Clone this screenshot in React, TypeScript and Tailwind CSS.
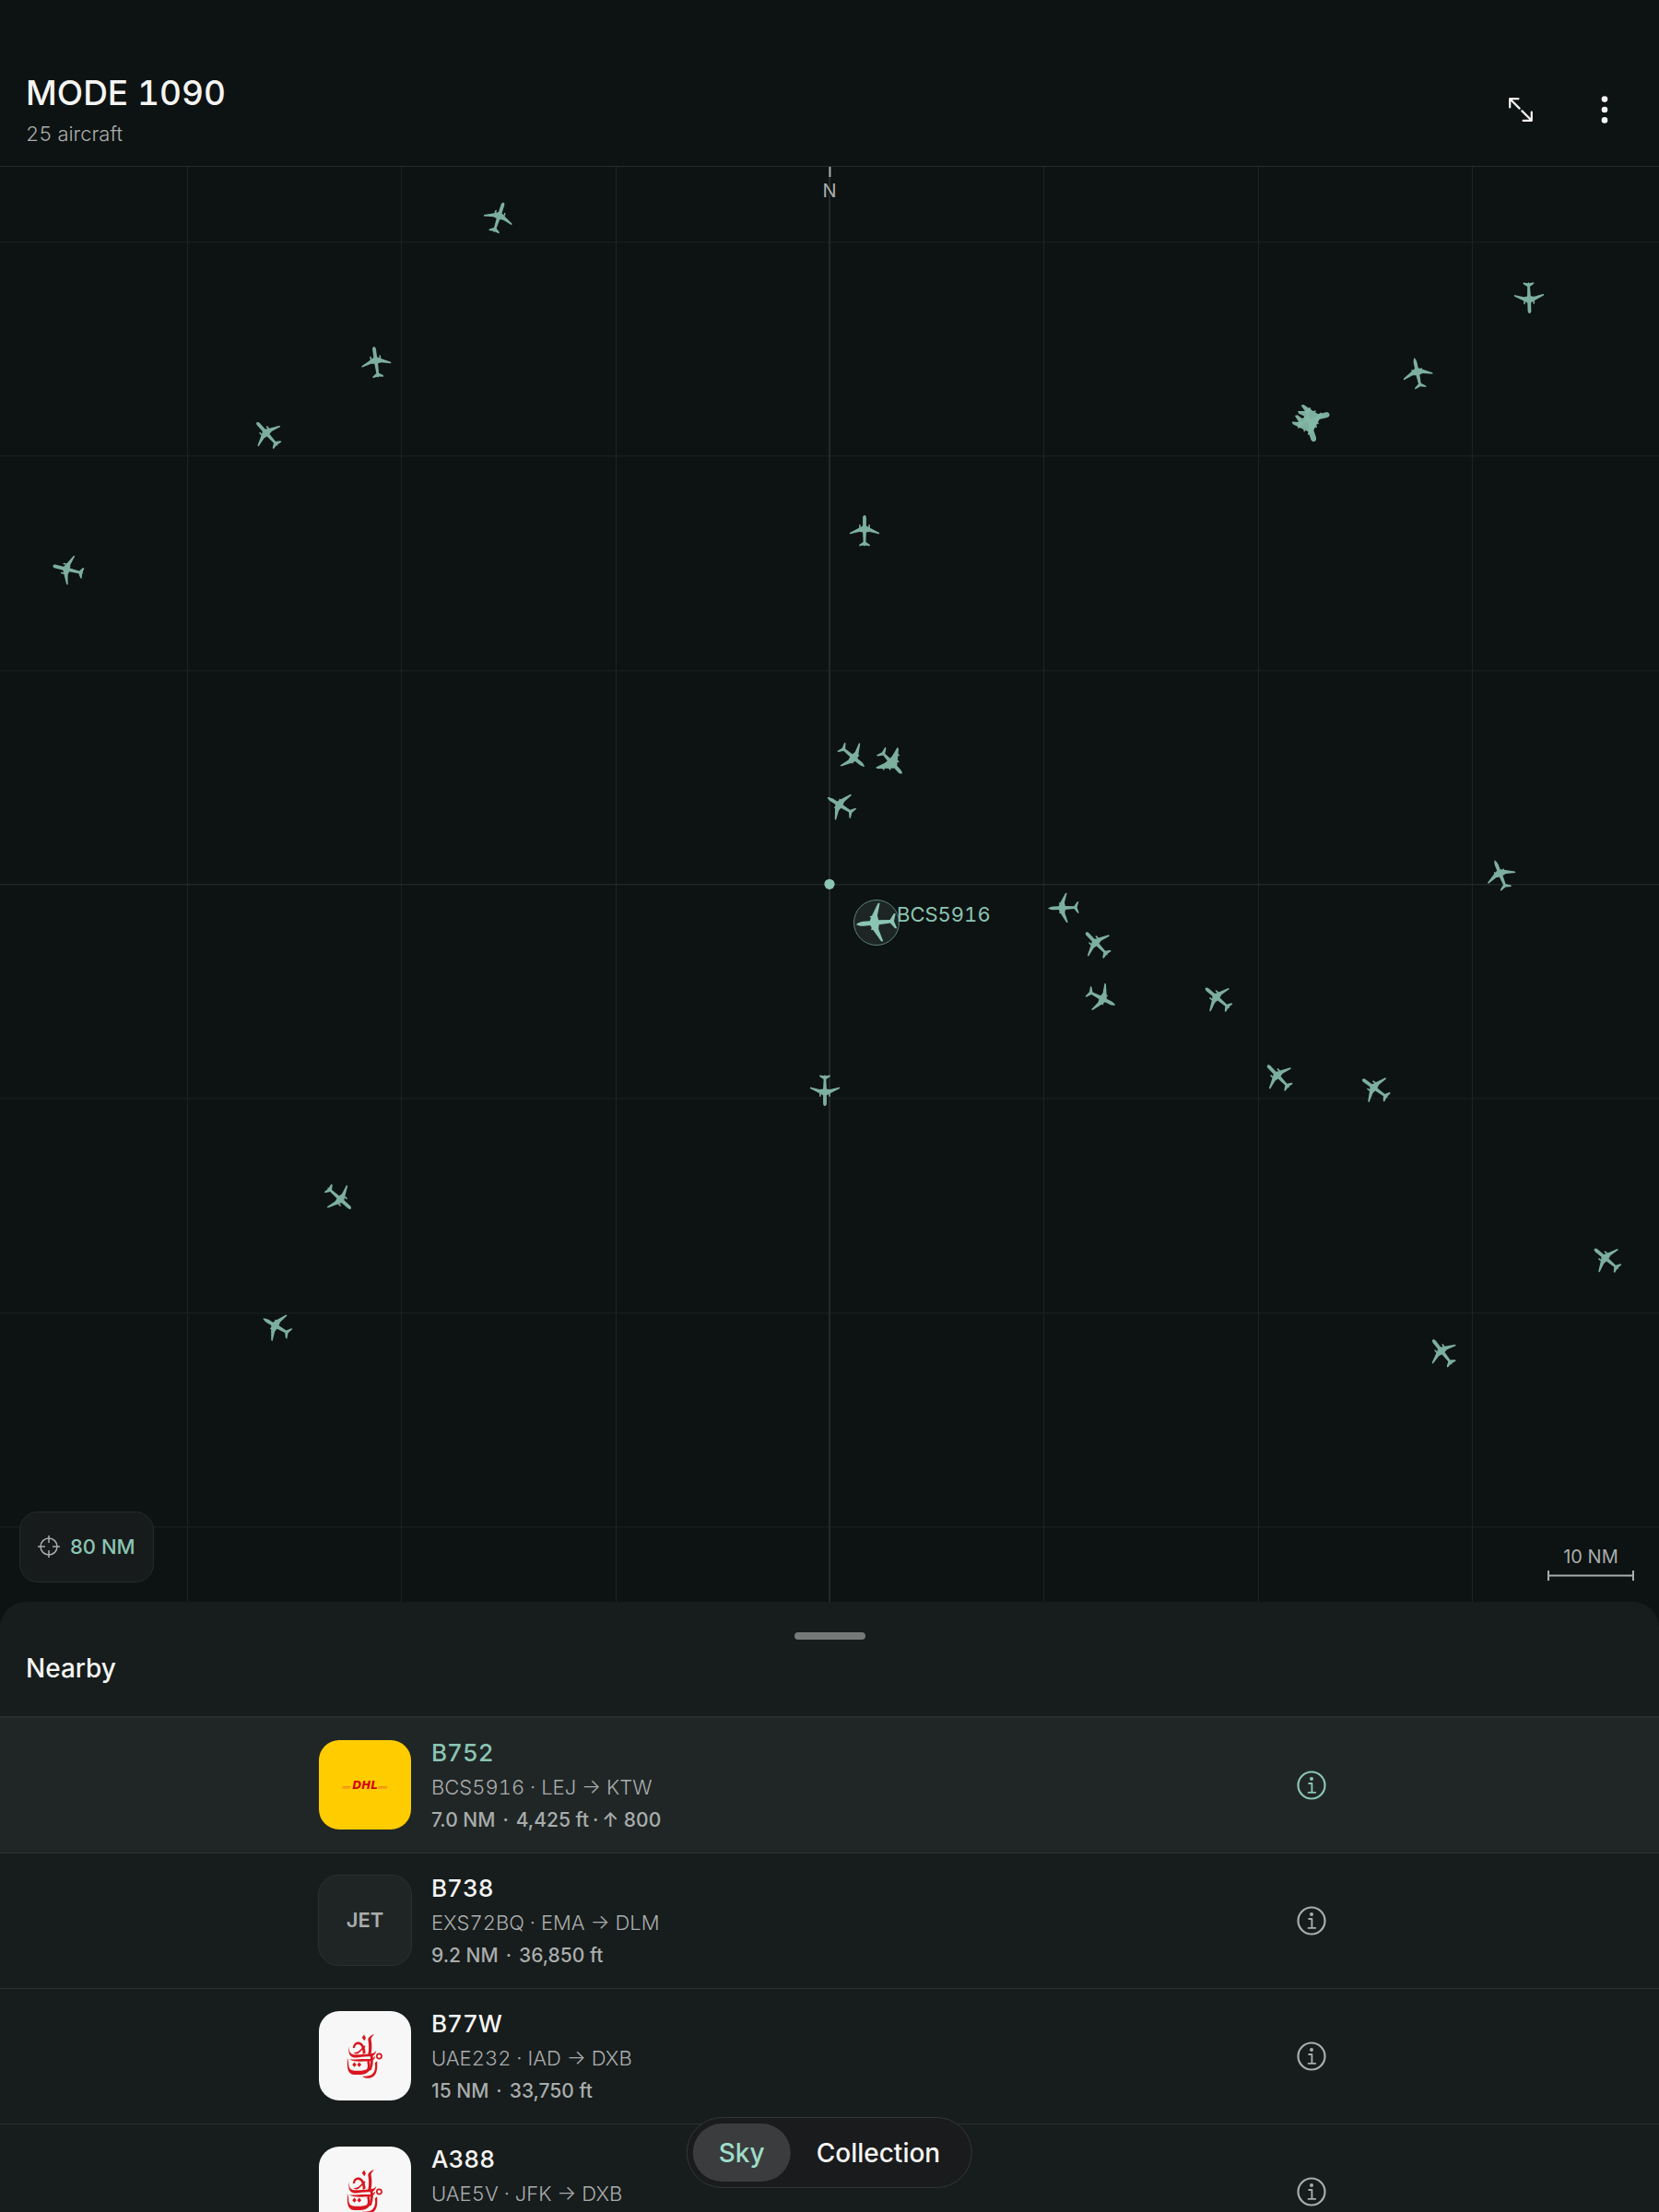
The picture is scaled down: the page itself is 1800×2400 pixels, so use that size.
import React from "react";

type Shape = "twin" | "slim" | "quad" | "jet";

interface Aircraft {
  id: string;
  x: number;
  y: number;
  heading: number;
  shape: Shape;
}

/* x and y are offsets in pixels from the observer, who stands in the centre of the map. */
const AIRCRAFT: Aircraft[] = [
  { id: "a1", x: -359, y: -723, heading: 18, shape: "twin" },
  { id: "a2", x: -492, y: -566, heading: -8, shape: "twin" },
  { id: "a3", x: -610, y: -488, heading: -42, shape: "twin" },
  { id: "a4", x: -826, y: -341, heading: -76, shape: "twin" },
  { id: "a5", x: 38, y: -383, heading: 0, shape: "twin" },
  { id: "a6", x: 759, y: -636, heading: 178, shape: "twin" },
  { id: "a7", x: 638, y: -554, heading: -12, shape: "slim" },
  { id: "a8", x: 523, y: -505, heading: 77, shape: "jet" },
  { id: "a9", x: 520, y: -499, heading: 162, shape: "jet" },
  { id: "a10", x: 25, y: -138, heading: 130, shape: "slim" },
  { id: "a11", x: 67, y: -132, heading: 137, shape: "quad" },
  { id: "a12", x: 12, y: -85, heading: -58, shape: "slim" },
  { id: "a14", x: 254, y: 26, heading: -92, shape: "slim" },
  { id: "a15", x: 290, y: 65, heading: -44, shape: "twin" },
  { id: "a16", x: 295, y: 124, heading: 117, shape: "slim" },
  { id: "a17", x: 421, y: 124, heading: -50, shape: "twin" },
  { id: "a18", x: 487, y: 209, heading: -44, shape: "twin" },
  { id: "a19", x: 592, y: 222, heading: -54, shape: "twin" },
  { id: "a20", x: 728, y: -10, heading: -22, shape: "slim" },
  { id: "a21", x: -5, y: 224, heading: 180, shape: "twin" },
  { id: "a22", x: -532, y: 341, heading: 132, shape: "twin" },
  { id: "a23", x: -600, y: 480, heading: -60, shape: "slim" },
  { id: "a24", x: 843, y: 407, heading: -50, shape: "twin" },
  { id: "a25", x: 665, y: 508, heading: -38, shape: "twin" },
];

interface Flight {
  type: string;
  callsign: string;
  from: string;
  to: string;
  distance?: string;
  altitude?: string;
  climb?: string;
  logo: "dhl" | "jet" | "emirates";
  selected?: boolean;
}

const FLIGHTS: Flight[] = [
  { type: "B752", callsign: "BCS5916", from: "LEJ", to: "KTW", distance: "7.0 NM", altitude: "4,425 ft", climb: "↑ 800", logo: "dhl", selected: true },
  { type: "B738", callsign: "EXS72BQ", from: "EMA", to: "DLM", distance: "9.2 NM", altitude: "36,850 ft", logo: "jet" },
  { type: "B77W", callsign: "UAE232", from: "IAD", to: "DXB", distance: "15 NM", altitude: "33,750 ft", logo: "emirates" },
  { type: "A388", callsign: "UAE5V", from: "JFK", to: "DXB", logo: "emirates" },
];

const SHAPES: Record<Shape, string> = {
  twin: "M0-17C1.3-17 1.9-15.6 1.9-14V-5.6L4.3-4V-6.3Q4.3-7 5.1-7T5.9-6.3V-3.2L16 2V3.6L5.6 1 1.9 1.6 1.4 12 5.8 15V16.6L.8 15.8 0 17-.8 15.8-5.8 16.6V15L-1.4 12-1.9 1.6-5.6 1-16 3.6V2L-5.9-3.2V-6.3Q-5.9-7-5.1-7T-4.3-6.3V-4L-1.9-5.6V-14C-1.9-15.6-1.3-17 0-17Z",
  slim: "M0-17C.9-16 1.9-13.5 1.9-11V-5.4L4.6-4.2V-5H5.8V-3.4L16 2.6V4.2L5.6 1.2 2 1.9 1.4 11.4 6.2 15V16.6L0 14.6-6.2 16.6V15L-1.4 11.4-2 1.9-5.6 1.2-16 4.2V2.6L-5.8-3.4V-5H-4.6V-4.2L-1.9-5.4V-11C-1.9-13.5-.9-16 0-17Z",
  quad: "M0-17C1.4-16.6 2-14 2-12V-7L5.4-4.2V-5.6H6.8V-2.8L10.4.4V-.8H11.8V1.6L16 5.4V7.4L5.6 4.2 2 4 1.4 11.4 6.4 15V16.6L0 14.8-6.4 16.6V15L-1.4 11.4-2 4-5.6 4.2-16 7.4V5.4L-11.8 1.6V-.8H-10.4V.4L-6.8-2.8V-5.6H-5.4V-4.2L-2-7V-12C-2-14-1.4-16.6 0-17Z",
  jet: "M0-20C2.2-20 3-18 3-16V-8L6-5V-6.4H7.5V-3.5L16.6 5V8L8 4.6 3.4 4 2.4 10 7 14V17L0 14.6-7 17V14L-2.4 10-3.4 4-8 4.6-16.6 8V5L-7.5-3.5V-6.4H-6V-5L-3-8V-16C-3-18-2.2-20 0-20Z",
};

function Plane({ shape, heading, size }: { shape: Shape; heading: number; size: number }) {
  return (
    <svg width={size} height={size} viewBox="-20 -20 40 40" className="block overflow-visible" fill="currentColor" aria-hidden="true">
      <path d={SHAPES[shape]} transform={`rotate(${heading})`} />
    </svg>
  );
}

const GRID = [-3, -2, -1, 1, 2, 3];

function SkyMap() {
  return (
    <main className="relative min-h-0 flex-[47] overflow-hidden">
      <svg className="absolute inset-0 h-full w-full" aria-hidden="true">
        <svg x="50%" y="50%" className="overflow-visible">
          {GRID.map((n) => (
            <g key={n} fill="#1d2222">
              <rect x={Math.round(n * 232.3)} y="-3000" width="1" height="6000" />
              <rect x="-4000" y={Math.round(n * 232.3)} width="8000" height="1" />
            </g>
          ))}
          <rect x="-1" y="-3000" width="2" height="6000" fill="#222727" />
          <rect x="-4000" y="0" width="8000" height="1" fill="#2a2f2f" />
          <circle cx="0" cy="0" r="5.6" fill="#8bc5b3" />
        </svg>
      </svg>

      <div className="absolute top-0 left-1/2 flex -translate-x-1/2 flex-col items-center">
        <span className="h-[11px] w-[2px] bg-[#a9adac]" />
        <span className="text-[20px] leading-[30px] text-[#a9adac]">N</span>
      </div>

      {AIRCRAFT.map((a) => (
        <div
          key={a.id}
          className="absolute -translate-x-1/2 -translate-y-1/2 text-[#84b8a8]/95"
          style={{ left: `calc(50% + ${a.x}px)`, top: `calc(50% + ${a.y}px)` }}
        >
          <Plane shape={a.shape} heading={a.heading} size={40} />
        </div>
      ))}

      <div className="absolute top-[calc(50%+17px)] left-[calc(50%+26px)] flex items-start text-[#8bc5b3]">
        <span className="flex size-[50px] items-center justify-center rounded-full border border-[#5c8277] bg-[#1e2625]">
          <Plane shape="slim" heading={-95} size={52} />
        </span>
        <span className="-ml-[3px] text-[22px] leading-[32px] tabular-nums">BCS5916</span>
      </div>

      <button
        type="button"
        className="absolute bottom-[21px] left-[21px] flex h-[77px] items-center gap-[11px] rounded-[20px] border border-[#252a2a] bg-[#171b1b] px-[19px] text-[22px] font-medium text-[#8bc5b3]"
      >
        <svg width="24" height="24" viewBox="0 0 24 24" fill="none" stroke="#a9adac" strokeWidth="1.5" aria-hidden="true">
          <circle cx="12" cy="12" r="9" />
          <path d="M12 0v8M12 16v8M0 12h8M16 12h8" />
        </svg>
        80 NM
      </button>

      <div className="absolute right-[27px] bottom-[23px] flex w-[94px] flex-col items-center text-[#a9adac]">
        <span className="text-[20px] leading-[27px]">10 NM</span>
        <svg width="94" height="11" viewBox="0 0 94 11" className="mt-px block" fill="currentColor" aria-hidden="true">
          <path d="M0 0h2v11H0zM92 0h2v11h-2zM0 4.6h94v1.8H0z" />
        </svg>
      </div>
    </main>
  );
}

function Logo({ kind }: { kind: Flight["logo"] }) {
  if (kind === "dhl") {
    return (
      <div className="flex h-[97px] w-[100px] shrink-0 items-center justify-center rounded-[22px] bg-[#ffcc00]">
        <svg width="60" height="20" viewBox="0 0 60 20" role="img" aria-label="DHL">
          <path
            fill="#ef7d1a"
            d="M6.4 11.2h8.6l-.4.8H5.8zM5.4 12.6h8.6l-.4.9H4.8zM45 11.2h9.8l-.5.8H44.5zM44.1 12.6h9.8l-.5.9H43.6z"
          />
          <text x="30" y="13.6" textAnchor="middle" fill="#d40511" fontFamily="'DejaVu Sans', sans-serif" fontSize="12" fontWeight="700" fontStyle="italic">
            DHL
          </text>
        </svg>
      </div>
    );
  }
  if (kind === "jet") {
    return (
      <div className="-mx-px flex h-[99px] w-[102px] shrink-0 items-center justify-center rounded-[22px] border border-[#2a2f2f] bg-[#1f2525] text-[22px] font-semibold text-[#a9adac]">
        JET
      </div>
    );
  }
  return (
    <div className="flex h-[97px] w-[100px] shrink-0 items-center justify-center rounded-[22px] bg-[#f6f7f6]">
      <svg width="40" height="50" viewBox="168 164 122 152" role="img" aria-label="Emirates">
        <g fill="#d9161f">
          <path d="M226 168l6 12-5 9-8-11z" />
          <path d="M260 166c-8 4-18 8-21 18 3 16 4 32 0 50l9 3c5-20 4-38 1-54 1-8 6-9 11-17z" />
          <path d="M189 213c0-14 10-22 21-20 11 3 19 14 21 36l-9 5c0-20-5-32-15-34-7 0-11 5-11 12z" />
          <path d="M226 204l5 5-24 22c-9 3-14-1-17-3 14 0 20-4 36-24z" />
          <path d="M175 207c3 18 3 22 14 27 12 3 35-2 54-2 12 0 20-4 23-10-2 13-9 19-23 19-22-1-41 7-55 2-13-6-13-16-13-36z" />
          <path d="M170 246c3 4 5 12 5 24 1 12 8 18 20 18 14 0 28 0 38-4 6-3 6-12 3-26l7-6c4 16 5 30-2 38-9 11-29 12-47 11-17-1-21-12-23-25-1-12 1-20-1-30z" />
          <path d="M194 260l7 8-7 8-7-8zM210 260l7 8-7 8-7-8z" />
          <path d="M176 250c18 2 38-2 62-1 12 0 19-2 25-10-1 12-10 17-25 18-24 0-44 3-62-7z" />
          <path d="M246 236l8-5c3 18 3 36-4 54l-9 4c7-18 8-36 5-53z" />
          <path d="M262 262l7-6c2 22 0 38-9 48-10 10-27 12-40 2 16 1 28-1 34-8 9-9 10-22 8-36z" />
        </g>
        <ellipse cx="276" cy="240" rx="8" ry="8" fill="none" stroke="#d9161f" strokeWidth="5" />
      </svg>
    </div>
  );
}

function FlightRow({ flight }: { flight: Flight }) {
  const sel = flight.selected;
  return (
    <li className={sel ? "border-b border-[#2d3333] bg-[#202626]" : "border-b border-[#292e2e]"}>
      <div className="mx-auto flex h-[146px] w-full max-w-[1108px] items-center">
        <Logo kind={flight.logo} />
        <div className="ml-[22px] flex min-w-0 flex-1 flex-col pt-0.5">
          <h3
            className={
              sel
                ? "text-[26px] leading-[38px] font-medium text-[#8bc5b3] tabular-nums"
                : "text-[26px] leading-[38px] font-medium text-[#f5f5f3] tabular-nums"
            }
          >
            {flight.type}
          </h3>
          <p className="text-[22px] leading-[36px] font-light text-[#a9adac] tabular-nums">
            {flight.callsign} · {flight.from} → {flight.to}
          </p>
          <p className="min-h-[36px] text-[21px] leading-[36px] font-medium text-[#a9adac]">
            {flight.distance && (
              <>
                {flight.distance}
                <span className="mx-2">·</span>
                {flight.altitude}
              </>
            )}
            {flight.climb && (
              <>
                <span className="mx-1">·</span>
                {flight.climb}
              </>
            )}
          </p>
        </div>
        <button
          type="button"
          aria-label={`Details for ${flight.type} ${flight.callsign}`}
          className={sel ? "flex size-[62px] items-center justify-center text-[#8bc5b3]" : "flex size-[62px] items-center justify-center text-[#a9adac]"}
        >
          <svg width="32" height="32" viewBox="0 0 32 32" fill="none" stroke="currentColor" aria-hidden="true">
            <circle cx="16" cy="16" r="14.5" strokeWidth="2.2" />
            <circle cx="16" cy="9" r="2" fill="currentColor" stroke="none" />
            <path d="M13.2 14h3.2v9.8M12.6 23.9h7.6" strokeWidth="1.9" strokeLinecap="round" strokeLinejoin="round" />
          </svg>
        </button>
      </div>
    </li>
  );
}

export default function App() {
  return (
    <div className="relative flex h-screen flex-col overflow-hidden bg-[#0d1212] font-['Inter',sans-serif] text-[#f5f5f3]">
      <header className="flex shrink-0 items-center justify-between border-b border-[#262b2b] pt-[75px] pr-7 pb-[17px] pl-7">
        <div>
          <h1 className="text-[37px] leading-[52px] font-medium tabular-nums">MODE 1090</h1>
          <p className="text-[22px] leading-[36px] font-light text-[#a9adac] tabular-nums">25 aircraft</p>
        </div>
        <div className="flex items-center gap-[29px]">
          <button type="button" aria-label="Expand" className="flex size-[62px] items-center justify-center">
            <svg width="26" height="26" viewBox="0 0 26 26" fill="none" stroke="currentColor" strokeWidth="2.2" strokeLinecap="round" strokeLinejoin="round" aria-hidden="true">
              <path d="M10.4 1.2H1.2v9.2M1.2 1.2l10.4 10.4M15.6 24.8h9.2v-9.2M24.8 24.8L14.4 14.4" />
            </svg>
          </button>
          <button type="button" aria-label="More" className="flex size-[62px] items-center justify-center">
            <svg width="8" height="30" viewBox="0 0 8 30" fill="currentColor" aria-hidden="true">
              <circle cx="4" cy="3.6" r="3.3" />
              <circle cx="4" cy="15" r="3.3" />
              <circle cx="4" cy="26.4" r="3.3" />
            </svg>
          </button>
        </div>
      </header>

      <SkyMap />

      <section className="flex min-h-0 flex-[20] flex-col rounded-t-[28px] bg-[#171c1c]">
        <div className="flex shrink-0 flex-col border-b-2 border-[#292f2f] px-7 pt-[33px] pb-[33px]">
          <span className="h-2 w-[77px] self-center rounded-full bg-[#757978]" />
          <h2 className="mt-[12px] text-[28px] leading-[38px] font-medium">Nearby</h2>
        </div>
        <ul className="min-h-0 flex-1 overflow-y-auto [scrollbar-width:none]">
          {FLIGHTS.map((f) => (
            <FlightRow key={f.callsign} flight={f} />
          ))}
        </ul>
      </section>

      <nav className="absolute bottom-[26px] left-1/2 flex -translate-x-1/2 items-center rounded-full border border-[#323737] bg-[#191b1c] p-[6px] text-[28px] leading-[40px] font-medium">
        <button type="button" aria-pressed="true" className="h-[63px] rounded-full bg-[#3a3c3d] px-7 text-[#9edcc8]">
          Sky
        </button>
        <button type="button" aria-pressed="false" className="h-[63px] rounded-full px-7">
          Collection
        </button>
      </nav>
    </div>
  );
}
